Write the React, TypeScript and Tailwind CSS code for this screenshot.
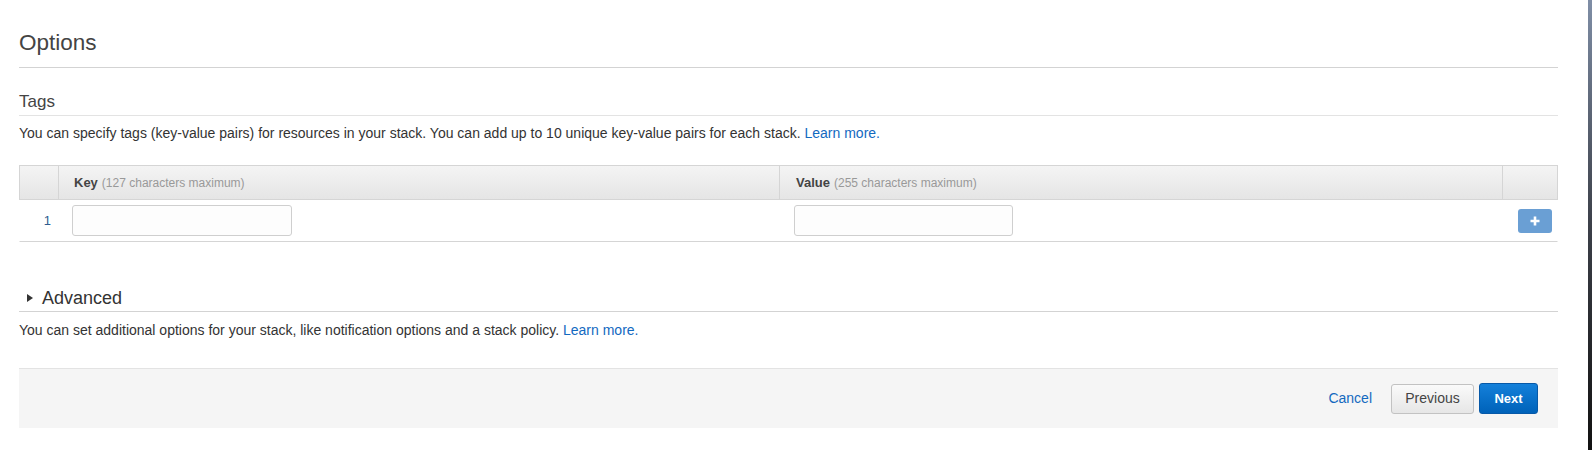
import React from 'react'

const font = "font-['Liberation_Sans',Arial,sans-serif]"

const TagsTable = () => (
  <div className="mt-[23px]">
    {/* header */}
    <div className="grid h-[35px] grid-cols-[38px_721px_723px_1fr] border border-[#d5d5d5] bg-gradient-to-b from-[#f4f4f4] to-[#e5e5e5]">
      <div />
      <div className="flex items-center border-l border-[#d5d5d5] pl-[15px]">
        <span className="text-[13px] font-bold text-[#444]">Key</span>
        <span className="ml-[4px] text-[12px] text-[#999]">(127 characters maximum)</span>
      </div>
      <div className="flex items-center border-l border-[#d5d5d5] pl-[16px]">
        <span className="text-[13px] font-bold text-[#444]">Value</span>
        <span className="ml-[4px] text-[12px] text-[#999]">(255 characters maximum)</span>
      </div>
      <div className="border-l border-[#d5d5d5]" />
    </div>
    {/* row */}
    <div className="grid h-[42px] grid-cols-[38px_721px_723px_1fr] border-x border-b border-x-transparent border-b-[#d5d5d5]">
      <div className="flex items-center justify-end pr-[7px] text-[13px] text-[#2f5c8f]">1</div>
      <div className="flex items-center border-l border-transparent pl-[13px]">
        <input className="h-[31px] w-[220px] rounded-[3px] border border-[#cfcfcf] bg-[#fdfdfd] outline-none" />
      </div>
      <div className="flex items-center border-l border-transparent pl-[14px]">
        <input className="h-[31px] w-[219px] rounded-[3px] border border-[#cfcfcf] bg-[#fdfdfd] outline-none" />
      </div>
      <div className="flex items-center justify-end border-l border-transparent pr-[5px]">
        <button className="flex h-[24px] w-[34px] items-center justify-center rounded-[3px] bg-[#6a9fd4] text-white">
          <svg width="12" height="12" viewBox="0 0 12 12">
            <path d="M6 1.5 V10.5 M1.5 6 H10.5" stroke="#fff" strokeWidth="2.6" />
          </svg>
        </button>
      </div>
    </div>
  </div>
)

export default function App() {
  return (
    <div className={`flex h-[450px] w-full bg-white ${font}`}>
      <div className="flex-1 pl-[19px] pr-[30px]">
        {/* Options */}
        <div className="mt-[30px] border-b border-[#d3d3d3] pb-[11px]">
          <h1 className="text-[22.5px] leading-[26px] text-[#444]">Options</h1>
        </div>

        {/* Tags */}
        <div className="mt-[24px] border-b border-[#e3e3e3] pb-[3px]">
          <h2 className="text-[17px] leading-[20px] text-[#444]">Tags</h2>
        </div>
        <p className="mt-[8px] text-[14px] leading-[18px] text-[#333]">
          You can specify tags (key-value pairs) for resources in your stack. You can add up to 10 unique key-value
          pairs for each stack. <a className="text-[#1369bf]">Learn more.</a>
        </p>

        <TagsTable />

        {/* Advanced */}
        <div className="mt-[45px] flex items-center border-b border-[#d3d3d3] pb-[2px]">
          <svg width="23" height="22" viewBox="0 0 23 22" className="shrink-0">
            <path d="M8 7 L14 11 L8 15 Z" fill="#333" />
          </svg>
          <h2 className="text-[18px] leading-[22px] text-[#333]">Advanced</h2>
        </div>
        <p className="mt-[9px] text-[14px] leading-[18px] text-[#333]">
          You can set additional options for your stack, like notification options and a stack policy.{' '}
          <a className="text-[#1369bf]">Learn more.</a>
        </p>

        {/* Footer */}
        <div className="mt-[29px] flex h-[60px] items-center justify-end border-t border-[#e3e3e3] bg-[#f5f5f5] pr-[20px]">
          <a className="text-[14px] text-[#1369bf]">Cancel</a>
          <button className="ml-[19px] h-[30px] w-[83px] rounded-[3px] border border-[#c2c2c2] bg-gradient-to-b from-[#fafafa] to-[#e6e6e6] text-[14px] text-[#444]">
            Previous
          </button>
          <button className="ml-[5px] h-[31px] w-[59px] rounded-[3px] border border-[#0759a8] bg-gradient-to-b from-[#1480da] to-[#0062b9] text-[13px] font-bold text-white">
            Next
          </button>
        </div>
      </div>
      {/* desktop edge */}
      <div className="w-[4px] bg-gradient-to-b from-[#7f8ea6] via-[#3c4049] to-[#121212]" />
    </div>
  )
}
